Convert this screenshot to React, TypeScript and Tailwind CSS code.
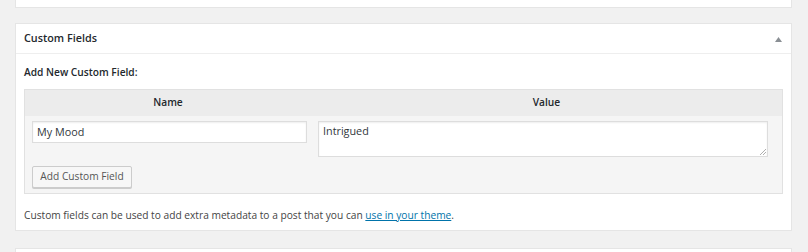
import React from "react";

export default function App() {
  return (
    <div
      className="w-[808px] h-[252px] overflow-hidden bg-[#f1f1f1] text-[#444] pl-[15px] pr-[16px]"
      style={{ fontFamily: '"Open Sans", "Noto Sans", sans-serif' }}
    >
      {/* top panel remainder */}
      <div className="h-[8px] bg-white border-x border-b border-[#e5e5e5]" />

      {/* custom fields panel */}
      <div className="mt-[15px] h-[208px] bg-white border border-[#e5e5e5] flex flex-col">
        <div className="h-[30px] shrink-0 border-b border-[#eeeeee] flex items-center justify-between pl-[8px] pr-[9px]">
          <h2 className="text-[10.8px] font-semibold text-[#23282d] leading-none">Custom Fields</h2>
          <svg width="7" height="5" viewBox="0 0 7 5" className="mt-[1px]">
            <path d="M0 5 L3.5 0 L7 5 Z" fill="#8a8f94" />
          </svg>
        </div>

        <div className="px-[8px] pt-[9px]">
          <p className="text-[10.2px] font-semibold text-[#23282d] leading-[18px]">Add New Custom Field:</p>

          <div className="mt-[8px] border border-[#e1e1e1] bg-[#f5f5f5]">
            <div className="h-[26px] bg-[#ececec] grid grid-cols-[286px_1fr] items-center text-[10.2px] font-semibold text-[#23282d]">
              <div className="text-center">Name</div>
              <div className="text-center">Value</div>
            </div>
            <div className="grid grid-cols-[286px_1fr] pt-[5px] pb-[5px]">
              <div className="pl-[7px] pr-[4px] flex flex-col">
                <div className="h-[22px] bg-white border border-[#dddddd] shadow-[inset_0_1px_2px_rgba(0,0,0,0.07)] flex items-center pl-[4px] text-[10.8px] text-[#32373c]">
                  My Mood
                </div>
                <div className="mt-[19px]">
                  <div className="inline-flex items-center justify-center w-[100px] h-[22px] bg-[#f7f7f7] border border-[#cccccc] rounded-[2px] shadow-[0_1px_0_#cccccc] text-[10.2px] text-[#555]">
                    Add Custom Field
                  </div>
                </div>
              </div>
              <div className="pl-[7px] pr-[14px]">
                <div className="relative h-[36px] bg-white border border-[#dddddd] shadow-[inset_0_1px_2px_rgba(0,0,0,0.07)] pl-[4px] pt-[2px] text-[10.8px] text-[#32373c] leading-[14px]">
                  Intrigued
                  <svg width="6" height="6" viewBox="0 0 6 6" className="absolute right-[1px] bottom-[1px]">
                    <path d="M6 0 L0 6 M6 3 L3 6" stroke="#9a9a9a" strokeWidth="0.8" />
                  </svg>
                </div>
              </div>
            </div>
          </div>

          <p className="mt-[13px] text-[10.2px] leading-[16px]">
            Custom fields can be used to add extra metadata to a post that you can{" "}
            <a className="text-[#0073aa] underline" href="#">use in your theme</a>.
          </p>
        </div>
      </div>

      {/* next panel */}
      <div className="mt-[17px] h-[20px] bg-white border border-[#e5e5e5]" />
    </div>
  );
}
